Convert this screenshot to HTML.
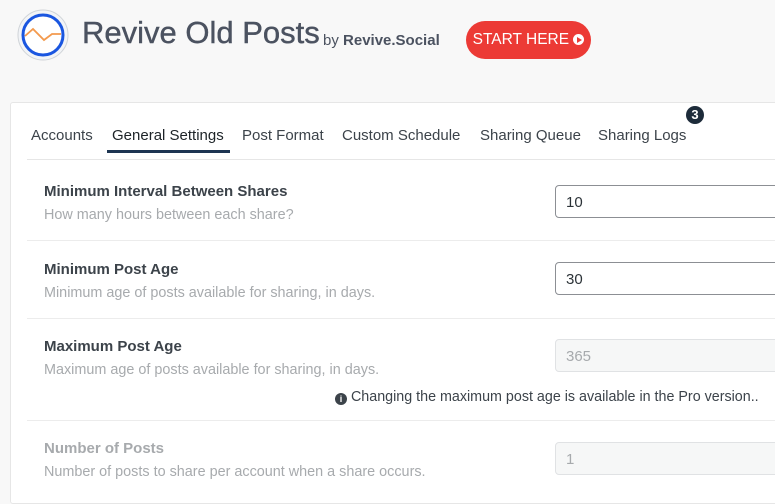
<!DOCTYPE html>
<html><head><style>
body{margin:0;width:775px;height:487px;overflow:hidden;background:#f8f8f8;font-family:"Liberation Sans",sans-serif;position:relative}
.abs{position:absolute}
.panel{left:10px;top:102px;width:780px;height:400px;background:#fff;border:1px solid #e6e6e6;border-radius:3px}
.tab{position:absolute;top:127px;font-size:15px;color:#3c434a}
.lbl{position:absolute;left:44px;font-size:15px;font-weight:bold;color:#3c434a}
.desc{position:absolute;left:44px;font-size:14.4px;color:#a7aaad}
.inp{position:absolute;left:555px;width:240px;height:33px;border:1px solid #8c8f94;border-radius:4px;background:#fff;box-sizing:border-box;font-size:15px;color:#2c3338;padding:8px 10px}
.dis{border-color:#e0e2e4;background:#f6f7f7;color:#a7aaad}
.sep{position:absolute;left:27px;width:760px;height:1px;background:#ececec}
</style></head><body>
<svg class="abs" style="left:16px;top:8px" width="54" height="54" viewBox="0 0 54 54">
<circle cx="27" cy="27" r="25" fill="#f2f4f7" stroke="#d0d4d8" stroke-width="1"/>
<circle cx="27" cy="27" r="20" fill="#fff" stroke="#1a56e0" stroke-width="3"/>
<path d="M9 28 L17 21 L28 32 L36 26 L45 26" fill="none" stroke="#f39a4e" stroke-width="1.8"/>
</svg>
<div class="abs" style="left:82px;top:15px;font-size:31px;color:#4b5260;-webkit-text-stroke:0.4px #4b5260">Revive Old Posts</div>
<div class="abs" style="left:323px;top:32px;font-size:15px;color:#4b5260">by <b>Revive.Social</b></div>
<div class="abs" style="left:466px;top:21px;width:125px;height:38px;border-radius:19px;background:#ec3a35;color:#fff;font-size:15.5px;line-height:38px;text-align:center">START HERE <span style="display:inline-block;width:11px;height:11px;border-radius:50%;background:#fff;vertical-align:-1px;position:relative"><span style="position:absolute;left:4px;top:2.5px;border-left:5px solid #ec3a35;border-top:3px solid transparent;border-bottom:3px solid transparent"></span></span></div>
<div class="abs panel"></div>
<div class="tab" style="left:31px">Accounts</div>
<div class="tab" style="left:112px;color:#1d2327">General Settings</div>
<div class="abs" style="left:107px;top:150px;width:123px;height:3px;background:#1d3552"></div>
<div class="tab" style="left:242px">Post Format</div>
<div class="tab" style="left:342px">Custom Schedule</div>
<div class="tab" style="left:480px">Sharing Queue</div>
<div class="tab" style="left:598px">Sharing Logs</div>
<div class="abs" style="left:686px;top:106px;width:18px;height:18px;border-radius:50%;background:#1d2b3a;color:#fff;font-size:13px;font-weight:bold;line-height:18px;text-align:center">3</div>
<div class="sep" style="top:159px;background:#e6e6e6"></div>
<div class="lbl" style="top:183px">Minimum Interval Between Shares</div>
<div class="desc" style="top:207px">How many hours between each share?</div>
<div class="inp" style="top:185px">10</div>
<div class="sep" style="top:240px"></div>
<div class="lbl" style="top:261px">Minimum Post Age</div>
<div class="desc" style="top:285px">Minimum age of posts available for sharing, in days.</div>
<div class="inp" style="top:262px">30</div>
<div class="sep" style="top:318px"></div>
<div class="lbl" style="top:338px">Maximum Post Age</div>
<div class="desc" style="top:362px">Maximum age of posts available for sharing, in days.</div>
<div class="inp dis" style="top:339px">365</div>
<div class="abs" style="left:335px;top:389px;font-size:14.3px;color:#3c434a"><span style="display:inline-block;width:12px;height:12px;border-radius:50%;background:#3c434a;color:#fff;font-size:9px;line-height:12px;text-align:center;font-weight:bold;vertical-align:-1px">i</span> Changing the maximum post age is available in the Pro version..</div>
<div class="sep" style="top:420px"></div>
<div class="lbl" style="top:440px;color:#a7aaad">Number of Posts</div>
<div class="desc" style="top:464px">Number of posts to share per account when a share occurs.</div>
<div class="inp dis" style="top:442px">1</div>
</body></html>
